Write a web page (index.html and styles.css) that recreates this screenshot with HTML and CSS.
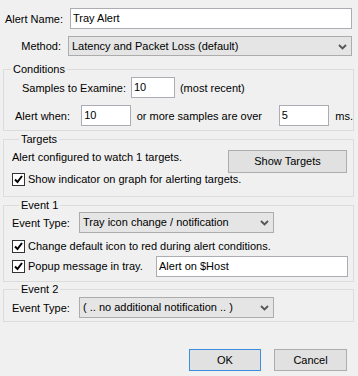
FILE: index.html
```html
<!DOCTYPE html>
<html>
<head>
<meta charset="utf-8">
<title>Tray Alert</title>
<link rel="stylesheet" href="styles.css">
</head>
<body>
<div class="dialog">
  <div class="row top">
    <span class="lbl lbl-name">Alert Name:</span>
    <div class="edit edit-name">Tray Alert</div>
  </div>
  <div class="row top method">
    <span class="lbl lbl-method">Method:</span>
    <div class="combo combo-method">Latency and Packet Loss (default)<svg class="arrow" width="9" height="6" viewBox="0 0 9 6"><path d="M1 1 L4.5 4.5 L8 1" fill="none" stroke="#555" stroke-width="1.8"/></svg></div>
  </div>

  <fieldset class="group cond">
    <legend>Conditions</legend>
    <div class="row samples">
      <span class="txt">Samples to Examine:</span>
      <div class="edit edit-samples">10</div>
      <span class="txt">(most recent)</span>
    </div>
    <div class="row when">
      <span class="txt">Alert when:</span>
      <div class="edit edit-when">10</div>
      <span class="txt over">or more samples are over</span>
      <div class="edit edit-ms">5</div>
      <span class="txt">ms.</span>
    </div>
  </fieldset>

  <fieldset class="group targets">
    <legend>Targets</legend>
    <div class="row targets-body">
      <div class="targets-left">
        <div class="line">Alert configured to watch 1 targets.</div>
        <div class="check-row first"><span class="box"><svg width="11" height="11" viewBox="0 0 11 11"><path d="M2 5.5 L4.5 8 L9 2" fill="none" stroke="#000" stroke-width="2"/></svg></span>Show indicator on graph for alerting targets.</div>
      </div>
      <div class="btn btn-show">Show Targets</div>
    </div>
  </fieldset>

  <fieldset class="group event1">
    <legend>Event 1</legend>
    <div class="row type">
      <span class="txt">Event Type:</span>
      <div class="combo combo-type">Tray icon change / notification<svg class="arrow" width="9" height="6" viewBox="0 0 9 6"><path d="M1 1 L4.5 4.5 L8 1" fill="none" stroke="#555" stroke-width="1.8"/></svg></div>
    </div>
    <div class="check-row icon"><span class="box"><svg width="11" height="11" viewBox="0 0 11 11"><path d="M2 5.5 L4.5 8 L9 2" fill="none" stroke="#000" stroke-width="2"/></svg></span>Change default icon to red during alert conditions.</div>
    <div class="row popup">
      <div class="check-row"><span class="box"><svg width="11" height="11" viewBox="0 0 11 11"><path d="M2 5.5 L4.5 8 L9 2" fill="none" stroke="#000" stroke-width="2"/></svg></span>Popup message in tray.</div>
      <div class="edit edit-msg">Alert on $Host</div>
    </div>
  </fieldset>

  <fieldset class="group event2">
    <legend>Event 2</legend>
    <div class="row type">
      <span class="txt">Event Type:</span>
      <div class="combo combo-type">( .. no additional notification .. )<svg class="arrow" width="9" height="6" viewBox="0 0 9 6"><path d="M1 1 L4.5 4.5 L8 1" fill="none" stroke="#555" stroke-width="1.8"/></svg></div>
    </div>
  </fieldset>

  <div class="row buttons">
    <div class="btn btn-ok">OK</div>
    <div class="btn btn-cancel">Cancel</div>
  </div>
</div>
</body>
</html>
```

FILE: styles.css
```css
body {
  margin: 0;
  background: #f0f0f0;
  font-family: "Liberation Sans", Arial, sans-serif;
  font-size: 11px;
  color: #000;
}

.dialog {
  display: flex;
  flex-direction: column;
  padding: 8px 4px 0 3px;
}

.row {
  display: flex;
  align-items: center;
}

.lbl {
  text-align: right;
  margin-right: 7px;
}

.lbl-name { width: 60px; }
.lbl-method { width: 58px; }

.method {
  margin-top: 7px;
}

.edit {
  box-sizing: border-box;
  height: 21px;
  line-height: 19px;
  padding: 0 2px;
  background: #fff;
  border: 1px solid #abadb3;
  white-space: nowrap;
}

.edit-name { width: 282px; }

.combo {
  position: relative;
  box-sizing: border-box;
  height: 21px;
  line-height: 19px;
  padding: 0 3px;
  background: #e5e5e5;
  border: 1px solid #acacac;
  white-space: nowrap;
}

.combo .arrow {
  position: absolute;
  right: 4px;
  top: 7px;
}

.combo-method {
  width: 284px;
  height: 20px;
  line-height: 18px;
}

.group {
  margin: 0;
  padding: 0;
  border: 1px solid #dcdcdc;
  min-width: 0;
}

.group legend {
  margin-left: 7px;
  padding: 0 2px;
  line-height: 13px;
}

.cond {
  margin-top: 7px;
  padding: 1px 0 4px;
}

.samples {
  padding-left: 18px;
}

.samples .txt:first-child {
  margin-right: 5px;
}

.edit-samples { width: 44px; margin-right: 5px; }

.when {
  margin-top: 7px;
  padding-left: 11px;
}

.when .txt:first-child { width: 67px; }
.edit-when { width: 50px; }
.over { width: 144px; margin-left: 6px; }
.edit-ms { width: 51px; margin-right: 6px; }

.targets {
  margin-top: 2px;
  padding: 5px 0 10px 8px;
}

.targets-body {
  align-items: flex-start;
}

.targets-left {
  width: 216px;
}

.line {
  line-height: 13px;
}

.check-row {
  display: flex;
  align-items: center;
  line-height: 13px;
  white-space: nowrap;
}

.check-row.first {
  margin-top: 9px;
}

.box {
  box-sizing: border-box;
  width: 13px;
  height: 13px;
  margin-right: 3px;
  border: 1px solid #333;
  background: #fff;
  display: flex;
}

.btn {
  box-sizing: border-box;
  height: 23px;
  line-height: 21px;
  text-align: center;
  background: #e1e1e1;
  border: 1px solid #adadad;
}

.btn-show {
  width: 119px;
  margin-top: -1px;
}

.event1 {
  margin-top: 2px;
  padding: 0 0 4px 8px;
}

.event1 .type .txt,
.event2 .type .txt {
  width: 67px;
}

.combo-type { width: 195px; }

.check-row.icon {
  margin-top: 7px;
}

.popup {
  margin-top: 3px;
}

.popup .check-row {
  width: 144px;
}

.edit-msg {
  width: 192px;
}

.event2 {
  margin-top: 1px;
  padding: 1px 0 3px 8px;
}

.buttons {
  margin-top: 27px;
  padding-left: 186px;
}

.btn-ok {
  width: 72px;
  height: 22px;
  line-height: 20px;
  border-color: #3c8fe0;
  margin-right: 13px;
}

.btn-cancel {
  width: 73px;
  height: 22px;
  line-height: 20px;
}
```
